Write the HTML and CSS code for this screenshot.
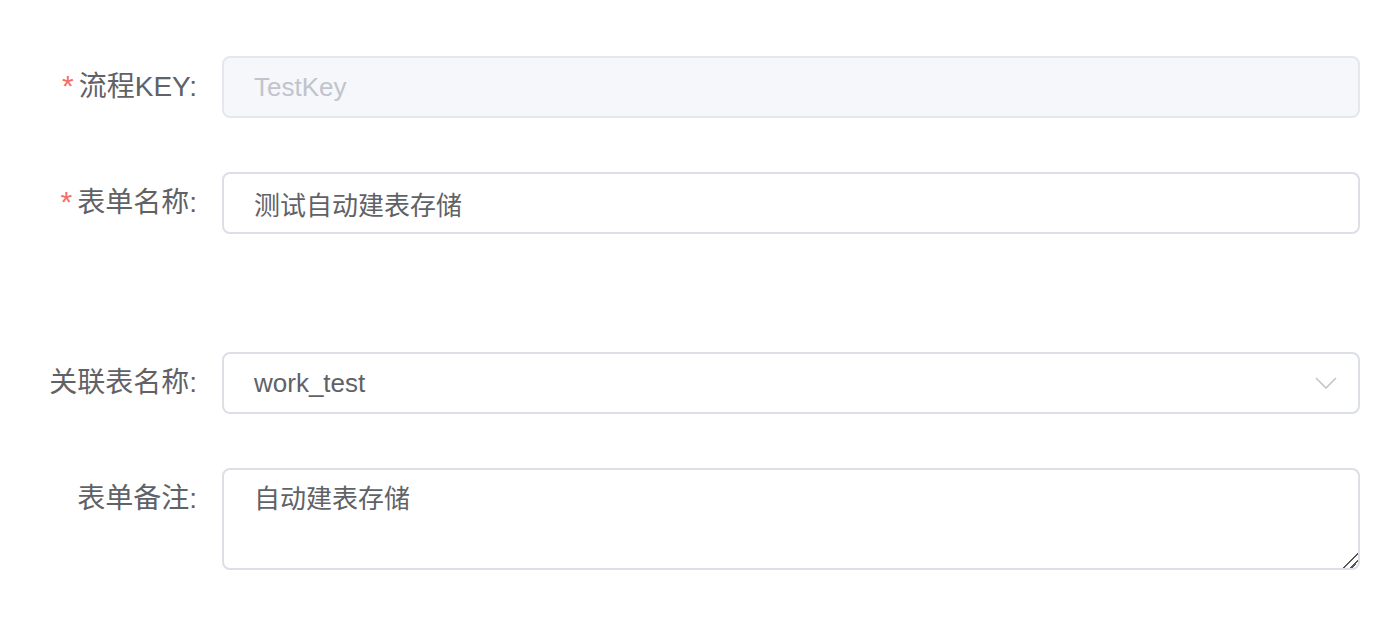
FILE: index.html
```html
<!DOCTYPE html>
<html lang="zh">
<head>
<meta charset="utf-8">
<link rel="stylesheet" href="styles.css">
</head>
<body>
<form class="form">
  <div class="item">
    <label class="label required">流程KEY:</label>
    <div class="content">
      <input class="input is-disabled" type="text" value="TestKey" disabled>
    </div>
  </div>
  <div class="item">
    <label class="label required">表单名称:</label>
    <div class="content">
      <input class="input" type="text" value="测试自动建表存储">
    </div>
  </div>
  <div class="spacer"></div>
  <div class="item">
    <label class="label">关联表名称:</label>
    <div class="content">
      <div class="select">
        <input class="input" type="text" value="work_test" readonly>
        <svg class="arrow" width="22" height="12" viewBox="0 0 22 12"><path d="M1 1 L11 11 L21 1" fill="none" stroke="#c0c4cc" stroke-width="1.6"/></svg>
      </div>
    </div>
  </div>
  <div class="item item-top">
    <label class="label">表单备注:</label>
    <div class="content">
      <textarea class="textarea">自动建表存储</textarea>
    </div>
  </div>
</form>
</body>
</html>
```
FILE: styles.css
```css
* { box-sizing: border-box; }
html, body { margin: 0; padding: 0; background: #fff; }
body {
  font-family: "Liberation Sans", "Noto Sans CJK SC", sans-serif;
  color: #606266;
}
.form {
  padding-top: 56px;
  padding-right: 32px;
}
.item {
  display: flex;
  align-items: center;
  margin-bottom: 54px;
}
.item-top { align-items: flex-start; }
.spacer { height: 64px; }
.label {
  width: 222px;
  height: 62px;
  flex: none;
  padding-right: 25px;
  text-align: right;
  font-size: 28px;
  color: #606266;
  line-height: 62px;
  overflow: hidden;
}
.required::before {
  content: "*";
  color: #f56c6c;
  margin-right: 5px;
  font-size: 30px;
  line-height: 0;
}
.content { flex: 1; min-width: 0; }
.input {
  display: block;
  width: 100%;
  height: 62px;
  border: 2px solid #dcdfe6;
  border-radius: 8px;
  padding: 0 30px;
  font-family: "Liberation Sans", "Noto Sans CJK SC", sans-serif;
  font-size: 26px;
  color: #606266;
  background: #fff;
  outline: none;
}
.input.is-disabled {
  background: #f5f7fa;
  border-color: #e4e7ed;
  color: #c0c4cc;
}
.select { position: relative; }
.select .input { padding-right: 70px; cursor: pointer; }
.arrow {
  position: absolute;
  right: 23px;
  top: 25px;
}
.textarea {
  display: block;
  width: 100%;
  height: 102px;
  border: 2px solid #dcdfe6;
  border-radius: 8px;
  padding: 10px 30px;
  font-family: "Liberation Sans", "Noto Sans CJK SC", sans-serif;
  font-size: 26px;
  line-height: 39px;
  color: #606266;
  background: #fff;
  resize: vertical;
  outline: none;
}
.textarea::-webkit-resizer {
  background: linear-gradient(135deg,
    transparent 0, transparent 47%,
    #555 47%, #555 55%,
    transparent 55%, transparent 72%,
    #555 72%, #555 80%,
    transparent 80%);
}
```
